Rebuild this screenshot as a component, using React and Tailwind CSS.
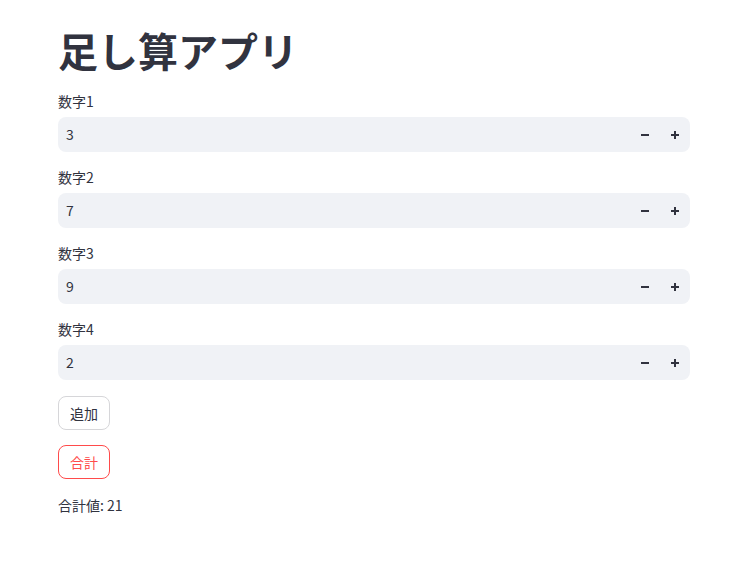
import React from "react";

const font = { fontFamily: '"Noto Sans CJK JP", "Noto Sans", sans-serif' };

function NumberInput({ label, value }) {
  return (
    <div className="flex flex-col">
      <div className="text-[14px] leading-[20px] text-[#31333F]">{label}</div>
      <div className="mt-[6px] h-[35px] w-[632px] rounded-lg bg-[#f0f2f6] flex items-center">
        <div className="flex-1 pl-[8px] text-[14px] text-[#31333F]">{value}</div>
        <div className="w-[30px] h-full flex items-center justify-center">
          <svg width="10" height="10" viewBox="0 0 10 10">
            <rect x="1" y="4" width="8" height="2" fill="#31333F" />
          </svg>
        </div>
        <div className="w-[30px] mr-[0px] h-full flex items-center justify-center">
          <svg width="10" height="10" viewBox="0 0 10 10">
            <rect x="1" y="4" width="8" height="2" fill="#31333F" />
            <rect x="4" y="1" width="2" height="8" fill="#31333F" />
          </svg>
        </div>
      </div>
    </div>
  );
}

export default function App() {
  return (
    <div className="w-[748px] h-[576px] bg-white" style={font}>
      <div className="pl-[58px] pt-[24px] flex flex-col">
        <h1 className="text-[40px] leading-[52px] font-bold text-[#31333F]">足し算アプリ</h1>
        <div className="mt-[15px] flex flex-col gap-[15px]">
          <NumberInput label="数字1" value="3" />
          <NumberInput label="数字2" value="7" />
          <NumberInput label="数字3" value="9" />
          <NumberInput label="数字4" value="2" />
        </div>
        <div className="mt-[16px]">
          <button className="h-[34px] px-[11px] rounded-lg border border-[#d6d6d9] bg-white text-[14px] text-[#31333F]">
            追加
          </button>
        </div>
        <div className="mt-[15px]">
          <button className="h-[34px] px-[11px] rounded-lg border border-[#ff4b4b] bg-white text-[14px] text-[#ff4b4b]">
            合計
          </button>
        </div>
        <div className="mt-[16px] text-[14px] leading-[20px] text-[#31333F]">合計値: 21</div>
      </div>
    </div>
  );
}
